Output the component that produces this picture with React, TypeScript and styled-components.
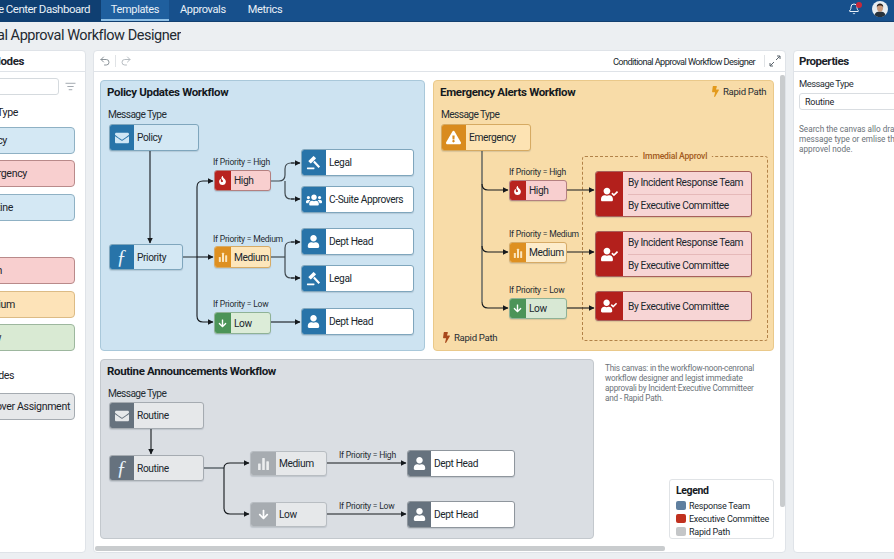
import React from "react";
import styled, { createGlobalStyle } from "styled-components";
import { Bell, Undo2, Redo2, ListFilter } from "lucide-react";
import {
  FaEnvelope, FaFire, FaUsers, FaUser, FaUserCheck,
  FaExclamationTriangle, FaArrowDown, FaBolt,
} from "react-icons/fa";

const Global = createGlobalStyle`
  html, body { margin: 0; padding: 0; background: #eceff2; }
  * { box-sizing: border-box; }
  body { font-family: Roboto, "Liberation Sans", sans-serif; color: #1c2329; }
`;

const Shell = styled.div`
  width: 894px; height: 559px; overflow: hidden; display: flex; flex-direction: column; background: #eceff2;
`;
const TopBar = styled.header`
  height: 22px; flex: none; display: flex; align-items: stretch; background: #17508c; border-bottom: 1px solid #123f70; color: #e9f1f8;
`;
const Brand = styled.div`
  width: 101px; flex: none; display: flex; justify-content: flex-end; align-items: center; overflow: hidden;
  padding: 0 11px 3px 0; white-space: nowrap; background: #0f3f72; font-size: 11.5px; letter-spacing: -0.5px; font-weight: 400;
`;
const Tab = styled.div<{ $active?: boolean }>`
  padding: 0 11px 3px; display: flex; align-items: center; font-size: 11px; letter-spacing: -0.35px; font-weight: 400;
  background: ${p => (p.$active ? "#1f5f9e" : "transparent")};
  box-shadow: ${p => (p.$active ? "inset 0 -2px 0 #8fc0e6" : "none")};
  width: ${p => (p.$active ? "68px" : "auto")};
  justify-content: center;
`;
const TopRight = styled.div`
  margin-left: auto; display: flex; align-items: center; gap: 12px; margin-right: 6px; padding-bottom: 3px; position: relative;
`;
const BellWrap = styled.div`
  position: relative; width: 12px; height: 12px; display: flex;
`;
const BellDot = styled.span`
  position: absolute; right: -2px; top: -1px; width: 6px; height: 6px; border-radius: 50%; background: #c8283a;
`;
const TitleRow = styled.div`
  height: 28px; flex: none; display: flex; align-items: center; padding-bottom: 2px;
`;
const PageTitle = styled.h1`
  margin: 0; width: 181px; display: flex; justify-content: flex-end; overflow: hidden; white-space: nowrap;
  font-size: 14.5px; font-weight: 400; color: #232a31; letter-spacing: -0.45px;
`;
const Main = styled.main`
  height: 503px; flex: none; display: flex; gap: 7px; margin-left: -50px;
`;
const Panel = styled.section`
  background: #fff; border: 1px solid #dfe3e8; border-radius: 4px; overflow: hidden; position: relative; flex: none;
`;
const Sidebar = styled(Panel)`
  width: 136px;
`;
const PanelHead = styled.div`
  height: 21px; display: flex; align-items: center; border-bottom: 1px solid #dfe3e8; font-size: 11.5px; font-weight: 700; letter-spacing: -0.4px; white-space: nowrap;
`;
const SideHead = styled(PanelHead)`
  justify-content: flex-end; padding-right: 61px;
`;
const SideBody = styled.div`
  display: flex; flex-direction: column; padding: 6px 10px 0 8px;
`;
const SearchRow = styled.div`
  display: flex; align-items: center; height: 17px; gap: 6px;
`;
const SearchBox = styled.div`
  width: 100px; height: 17px; border: 1px solid #d5dade; border-radius: 3px; background: #fff; flex: none;
`;
const Filter = styled.span`
  color: #9aa1a8; display: flex;
`;
const SideLabel = styled.div<{ $top: number; $w: number }>`
  font-size: 10.6px; letter-spacing: -0.4px; margin-top: ${p => p.$top}px; height: 13px; line-height: 13px; width: ${p => p.$w}px;
  display: flex; justify-content: flex-end; white-space: nowrap;
`;
const PaletteItem = styled.div<{ $bg: string; $line: string; $top: number; $end: number }>`
  height: 27px; width: 116px; margin-top: ${p => p.$top}px; display: flex; align-items: center; justify-content: flex-end; padding-right: ${p => p.$end}px;
  border: 1px solid ${p => p.$line}; border-radius: 4px; background: ${p => p.$bg}; font-size: 10.6px; letter-spacing: -0.35px; white-space: nowrap;
`;
const Designer = styled(Panel)`
  width: 693px;
`;
const Toolbar = styled(PanelHead)`
  font-weight: 400; padding: 0 4px 0 5px; gap: 1px; color: #8b9399;
`;
const ToolDivider = styled.span`
  width: 1px; height: 12px; background: #e0e3e6; margin: 0 3px;
`;
const ToolTitle = styled.span`
  margin-left: auto; margin-right: 5px; font-size: 9.2px; letter-spacing: -0.58px; color: #20272d; font-weight: 400;
`;
const CanvasBody = styled.div`
  padding: 8px 0 0 6px; display: flex; flex-direction: column; gap: 8px;
`;
const TopCards = styled.div`
  display: flex; gap: 8px;
`;
const BottomRow = styled.div`
  display: flex; gap: 11px;
`;
const Card = styled.div<{ $w: number; $h: number; $bg: string; $line: string }>`
  position: relative; flex: none; width: ${p => p.$w}px; height: ${p => p.$h}px; background: ${p => p.$bg};
  border: 1px solid ${p => p.$line}; border-radius: 4px;
`;
const CardTitle = styled.h2`
  position: absolute; left: 6px; top: 3px; margin: 0; font-size: 11.5px; line-height: 16px; font-weight: 700; letter-spacing: -0.33px; color: #14191e; white-space: nowrap;
`;
const Edges = styled.svg`
  position: absolute; left: -1px; top: -1px; pointer-events: none; overflow: visible;
`;
const Caption = styled.div<{ $x: number; $y: number; $s?: number }>`
  position: absolute; left: ${p => p.$x}px; top: ${p => p.$y}px; font-size: ${p => p.$s ?? 8.6}px; line-height: 12px; letter-spacing: ${p => (p.$s ? -0.6 : -0.25)}px; color: #262d33; white-space: nowrap;
`;
const Node = styled.div<{ $x: number; $y: number; $w: number; $h: number; $bg: string; $line: string }>`
  position: absolute; left: ${p => p.$x}px; top: ${p => p.$y}px; width: ${p => p.$w}px; height: ${p => p.$h}px;
  display: flex; background: ${p => p.$bg}; border: 1px solid ${p => p.$line}; border-radius: 3px; overflow: hidden;
  box-shadow: 0 1px 1px rgba(40,60,80,.15);
`;
const NodeIcon = styled.div<{ $w: number; $bg: string }>`
  flex: none; width: ${p => p.$w}px; background: ${p => p.$bg}; color: #fff; display: flex; align-items: center; justify-content: center; margin: -1px 0 -1px -1px;
`;
const NodeText = styled.div<{ $pad: number }>`
  flex: 1; display: flex; flex-direction: column; justify-content: center; padding-left: ${p => p.$pad}px; font-size: 10.2px; letter-spacing: -0.4px; color: #20272d; white-space: nowrap; min-width: 0;
`;
const StackLine = styled.div`
  flex: 1; display: flex; align-items: center; & + & { border-top: 1px solid #e6b9b9; }
`;
const FuncGlyph = styled.span`
  font-family: "Liberation Serif", serif; font-style: italic; font-size: 20px; line-height: 1; color: #e9f3fa;
`;
const DashedBox = styled.div`
  position: absolute; left: 148px; top: 75px; width: 186px; height: 185px; border: 1px dashed #b28248; border-radius: 3px;
`;
const DashedLabel = styled.span`
  position: absolute; left: 50%; top: -6px; transform: translateX(-50%); background: #f8dca8; padding: 0 5px; font-size: 8.6px; line-height: 11px; letter-spacing: -0.2px; font-weight: 500; color: #a25a20; white-space: nowrap;
`;
const RapidTag = styled.div<{ $x: number; $y: number; $c: string }>`
  position: absolute; left: ${p => p.$x}px; top: ${p => p.$y}px; display: flex; align-items: center; gap: 2px; font-size: 9.6px; letter-spacing: -0.3px; color: #262d33; white-space: nowrap;
  & svg { color: ${p => p.$c}; }
`;
const SideColumn = styled.div`
  width: 169px; flex: none; display: flex; flex-direction: column; justify-content: space-between; padding-top: 4px;
`;
const Note = styled.p`
  margin: 0; font-size: 8.2px; line-height: 10px; letter-spacing: -0.2px; color: #6b7278; white-space: nowrap;
`;
const Legend = styled.div`
  width: 105px; height: 60px; align-self: flex-end; border: 1px solid #e0e3e6; border-radius: 3px; padding: 4px 6px 0; background: #fff;
  display: flex; flex-direction: column;
`;
const LegendTitle = styled.div`
  font-size: 10.5px; font-weight: 700; letter-spacing: -0.4px; line-height: 14px; margin-bottom: 1px; color: #14191e;
`;
const LegendRow = styled.div`
  display: flex; align-items: center; gap: 3px; height: 13px; font-size: 9px; letter-spacing: -0.25px; color: #20272d; white-space: nowrap;
`;
const Swatch = styled.span<{ $c: string }>`
  flex: none; width: 10px; height: 9px; border-radius: 2px; background: ${p => p.$c};
`;
const VScroll = styled.div`
  position: absolute; right: 0; top: 24px; width: 5px; height: 432px; background: #c9ccce; border-radius: 2px;
`;
const HScroll = styled.div`
  position: absolute; left: 1px; bottom: 1px; width: 570px; height: 5px; background: #c9ccce; border-radius: 2px;
`;
const Properties = styled(Panel)`
  width: 120px;
`;
const PropHead = styled(PanelHead)`
  padding-left: 5px; font-size: 11.5px; letter-spacing: -0.45px;
`;
const PropBody = styled.div`
  padding: 6px 0 0 5px; display: flex; flex-direction: column;
`;
const PropLabel = styled.div`
  font-size: 9.4px; letter-spacing: -0.5px; line-height: 12px; color: #2a3137;
`;
const PropSelect = styled.div`
  margin-top: 3px; height: 17px; width: 130px; border: 1px solid #d9dde1; border-radius: 3px; padding-left: 5px; display: flex; align-items: center; font-size: 9px; letter-spacing: -0.2px;
`;
const PropNote = styled.p`
  margin: 14px 0 0; font-size: 8.2px; line-height: 10px; color: #6b7278; white-space: nowrap;
`;

const Bars = ({ size = 10, color = "#fff" }: { size?: number; color?: string }) => (
  <svg width={size} height={size} viewBox="0 0 12 12" fill={color}>
    <rect x="1" y="6" width="2.4" height="6" rx=".5" />
    <rect x="4.8" y="1" width="2.4" height="11" rx=".5" />
    <rect x="8.6" y="4" width="2.4" height="8" rx=".5" />
  </svg>
);
const Gavel = ({ size = 14 }: { size?: number }) => (
  <svg width={size} height={size} viewBox="0 0 16 16" fill="#fff">
    <rect x="2.6" y="3.2" width="8" height="3.8" rx=".5" transform="rotate(-45 6.6 5.1)" />
    <path d="M7.6 7.6l1.6-1.6 5.8 6.2-1.7 1.6z" />
    <rect x="1" y="13.2" width="8" height="1.9" rx=".5" />
  </svg>
);
const Expand = () => (
  <svg width="12" height="12" viewBox="0 0 12 12" fill="none" stroke="#5b646c" strokeWidth="1">
    <path d="M7 5l4-4M8 1h3v3" />
    <path d="M5 7l-4 4M1 8v3h3" />
  </svg>
);
const Avatar = () => (
  <svg width="16" height="16" viewBox="0 0 16 16">
    <circle cx="8" cy="8" r="8" fill="#e8edf1" />
    <path d="M2.5 14c.6-2.6 2.6-3.6 5.5-3.6s4.9 1 5.5 3.6A8 8 0 0 1 2.5 14z" fill="#26313b" />
    <ellipse cx="8" cy="7" rx="3" ry="3.7" fill="#c99a7c" />
    <path d="M4.8 6.4C4.6 3.6 6.2 2.5 8 2.5s3.5 1.1 3.2 3.9c-.5-1.4-1.4-1.8-3.2-1.8s-2.7.4-3.2 1.8z" fill="#2b211c" />
  </svg>
);

type IconKey = "mail" | "func" | "fire" | "bars" | "down" | "gavel" | "users" | "user" | "check" | "warn";
const icon = (k: IconKey, s: number, mailColor?: string) => {
  switch (k) {
    case "mail": return <FaEnvelope size={s} color={mailColor} />;
    case "func": return <FuncGlyph>ƒ</FuncGlyph>;
    case "fire": return <FaFire size={s} />;
    case "bars": return <Bars size={s} color={mailColor ?? "#fbe6bf"} />;
    case "down": return <FaArrowDown size={s} />;
    case "gavel": return <Gavel size={s} />;
    case "users": return <FaUsers size={s} />;
    case "user": return <FaUser size={s} />;
    case "check": return <FaUserCheck size={s} />;
    case "warn": return <FaExclamationTriangle size={s} />;
  }
};

type N = { x: number; y: number; w: number; h: number; iw: number; ib: string; bg: string; line: string; k: IconKey; s: number; t: string[]; mc?: string; pad?: number };
const BLUE = { ib: "#2874a9", bg: "#d4e8f4", line: "#7fa6bd" };
const WHITE = { ib: "#2874a9", bg: "#fff", line: "#7fa6bd" };
const HI = { ib: "#b8231f", bg: "#f8cfcf", line: "#b48080" };
const ME = { ib: "#de9021", bg: "#fde6bb", line: "#d7ab66" };
const LO = { ib: "#4c9458", bg: "#dcecd8", line: "#8fb296" };
const RD = { ib: "#b3201c", bg: "#f7d5d5", line: "#a8605a", pad: 5 };
const GR = { ib: "#66727e", bg: "#e6e8ea", line: "#a5abb1" };
const GW = { ib: "#66727e", bg: "#fff", line: "#8f969d" };
const GL = { ib: "#a7acb1", bg: "#e6e8ea", line: "#b8bdc2" };

const policyNodes: N[] = [
  { x: 109, y: 124, w: 90, h: 27, iw: 25, ...BLUE, k: "mail", s: 14, mc: "#cfe6f5", t: ["Policy"] },
  { x: 109, y: 244, w: 74, h: 26, iw: 25, ...BLUE, k: "func", s: 14, t: ["Priority"] },
  { x: 214, y: 170, w: 57, h: 21, iw: 17, ...HI, k: "fire", s: 9, t: ["High"] },
  { x: 214, y: 246, w: 57, h: 22, iw: 17, ...ME, k: "bars", s: 10, t: ["Medium"] },
  { x: 214, y: 312, w: 57, h: 22, iw: 17, ...LO, k: "down", s: 9, t: ["Low"] },
  { x: 301, y: 149, w: 113, h: 27, iw: 25, ...WHITE, k: "gavel", s: 15, t: ["Legal"] },
  { x: 301, y: 186, w: 113, h: 27, iw: 25, ...WHITE, k: "users", s: 16, t: ["C-Suite Approvers"] },
  { x: 301, y: 228, w: 113, h: 27, iw: 25, ...WHITE, k: "user", s: 13, t: ["Dept Head"] },
  { x: 301, y: 265, w: 113, h: 27, iw: 25, ...WHITE, k: "gavel", s: 15, t: ["Legal"] },
  { x: 301, y: 308, w: 113, h: 27, iw: 25, ...WHITE, k: "user", s: 13, t: ["Dept Head"] },
];
const emergencyNodes: N[] = [
  { x: 441, y: 124, w: 90, h: 27, iw: 25, ib: "#d98b1e", bg: "#fde3b3", line: "#d6aa62", k: "warn", s: 15, t: ["Emergency"] },
  { x: 509, y: 180, w: 58, h: 21, iw: 17, ...HI, k: "fire", s: 9, t: ["High"] },
  { x: 509, y: 242, w: 58, h: 21, iw: 17, ...ME, bg: "#fdeccb", k: "bars", s: 10, t: ["Medium"] },
  { x: 509, y: 298, w: 58, h: 21, iw: 17, ...LO, bg: "#d8e8d4", k: "down", s: 9, t: ["Low"] },
  { x: 595, y: 171, w: 157, h: 46, iw: 28, ...RD, k: "check", s: 17, t: ["By Incident Response Team", "By Executive Committee"] },
  { x: 595, y: 231, w: 157, h: 46, iw: 28, ...RD, k: "check", s: 17, t: ["By Incident Response Team", "By Executive Committee"] },
  { x: 595, y: 291, w: 157, h: 30, iw: 28, ...RD, k: "check", s: 16, t: ["By Executive Committee"] },
];
const routineNodes: N[] = [
  { x: 109, y: 402, w: 95, h: 27, iw: 25, ...GR, k: "mail", s: 14, mc: "#e6e8ea", t: ["Routine"] },
  { x: 109, y: 455, w: 95, h: 26, iw: 25, ...GR, k: "func", s: 14, t: ["Routine"] },
  { x: 250, y: 451, w: 77, h: 25, iw: 26, ...GL, k: "bars", s: 13, mc: "#eceeef", t: ["Medium"] },
  { x: 250, y: 502, w: 77, h: 25, iw: 26, ...GL, k: "down", s: 11, t: ["Low"] },
  { x: 407, y: 450, w: 108, h: 27, iw: 24, ...GW, k: "user", s: 13, t: ["Dept Head"] },
  { x: 407, y: 501, w: 108, h: 27, iw: 24, ...GW, k: "user", s: 13, t: ["Dept Head"] },
];

const renderNodes = (nodes: N[], ox: number, oy: number) =>
  nodes.map((n, i) => (
    <Node key={i} $x={n.x - ox - 1} $y={n.y - oy - 1} $w={n.w} $h={n.h} $bg={n.bg} $line={n.line}>
      <NodeIcon $w={n.iw} $bg={n.ib}>{icon(n.k, n.s, n.mc)}</NodeIcon>
      <NodeText $pad={n.pad ?? 3}>
        {n.t.map(line => <StackLine key={line}>{line}</StackLine>)}
      </NodeText>
    </Node>
  ));

const Wires = ({ ox, oy, w, h, id, solid, arrows }: { ox: number; oy: number; w: number; h: number; id: string; solid: string[]; arrows: string[] }) => (
  <Edges width={w} height={h} viewBox={`${ox} ${oy} ${w} ${h}`}>
    <defs>
      <marker id={id} markerWidth="6" markerHeight="6" refX="5.5" refY="3" orient="auto" markerUnits="userSpaceOnUse">
        <path d="M0 0L6 3L0 6z" fill="#15191d" />
      </marker>
    </defs>
    {solid.map((d, i) => <path key={i} d={d} fill="none" stroke="#3f484f" strokeWidth="1.2" />)}
    {arrows.map((d, i) => <path key={i} d={d} fill="none" stroke="#15191d" strokeWidth="1.1" markerEnd={`url(#${id})`} />)}
  </Edges>
);

const palette = [
  { t: "Policy", bg: "#d4e8f4", line: "#8fb1c4", top: 8, end: 67 },
  { t: "Emergency", bg: "#f8cfcf", line: "#b98a8a", top: 6, end: 47 },
  { t: "Routine", bg: "#d4e8f4", line: "#8fb1c4", top: 7, end: 61 },
];
const priority = [
  { t: "High", bg: "#f8cfcf", line: "#b98a8a", top: 36, end: 72 },
  { t: "Medium", bg: "#fde3b8", line: "#dcbb85", top: 7, end: 59 },
  { t: "Low", bg: "#d9ead3", line: "#9db79e", top: 6, end: 73 },
];

export default function App() {
  return (
    <Shell>
      <Global />
      <TopBar>
        <Brand>Message Center Dashboard</Brand>
        <Tab $active>Templates</Tab>
        <Tab>Approvals</Tab>
        <Tab>Metrics</Tab>
        <TopRight>
          <BellWrap><Bell size={12} color="#e9f1f8" /><BellDot /></BellWrap>
          <Avatar />
        </TopRight>
      </TopBar>
      <TitleRow><PageTitle>Conditional Approval Workflow Designer</PageTitle></TitleRow>
      <Main>
        <Sidebar>
          <SideHead>Workflow Nodes</SideHead>
          <SideBody>
            <SearchRow>
              <SearchBox />
              <Filter><ListFilter size={11} /></Filter>
            </SearchRow>
            <SideLabel $top={11} $w={59}>Message Type</SideLabel>
            {palette.map(p => <PaletteItem key={p.t} $bg={p.bg} $line={p.line} $top={p.top} $end={p.end}>{p.t}</PaletteItem>)}
            {priority.map(p => <PaletteItem key={p.t} $bg={p.bg} $line={p.line} $top={p.top} $end={p.end}>{p.t}</PaletteItem>)}
            <SideLabel $top={18} $w={55}>Approver Nodes</SideLabel>
            <PaletteItem $bg="#e6e8ea" $line="#a5abb1" $top={11} $end={4}>Approver Assignment</PaletteItem>
          </SideBody>
        </Sidebar>
        <Designer>
          <Toolbar>
            <Undo2 size={12} />
            <ToolDivider />
            <Redo2 size={12} color="#b6bcc1" />
            <ToolTitle>Conditional Approval Workflow Designer</ToolTitle>
            <ToolDivider />
            <Expand />
          </Toolbar>
          <CanvasBody>
            <TopCards>
              <Card $w={325} $h={271} $bg="#cde3f1" $line="#a9c8da">
                <Wires ox={100} oy={80} w={325} h={271} id="a1"
                  solid={[
                    "M183 257H197", "M271 181H279Q285 181 285 175V169Q285 163 291 163H294", "M285 181V193Q285 199 291 199H294",
                    "M271 257H285", "M285 257V248Q285 242 291 242H294", "M285 257V272Q285 278 291 278H294",
                  ]}
                  arrows={[
                    "M150 150V243", "M197 257H213", "M197 257V187Q197 181 203 181H213", "M197 257V316Q197 322 203 322H213",
                    "M291 163H300", "M291 199H300", "M291 242H300", "M291 278H300", "M271 322H300",
                  ]} />
                <CardTitle>Policy Updates Workflow</CardTitle>
                <Caption $x={7} $y={28} $s={10.2}>Message Type</Caption>
                <Caption $x={112} $y={75}>If Priority = High</Caption>
                <Caption $x={112} $y={152}>If Priority = Medium</Caption>
                <Caption $x={112} $y={217}>If Priority = Low</Caption>
                {renderNodes(policyNodes, 100, 80)}
              </Card>
              <Card $w={341} $h={271} $bg="#f8dca8" $line="#eac98a">
                <DashedBox><DashedLabel>Immedial Approvl</DashedLabel></DashedBox>
                <Wires ox={433} oy={80} w={341} h={271} id="a2"
                  solid={["M482 150V302"]}
                  arrows={[
                    "M482 184Q482 190 488 190H508", "M482 246Q482 252 488 252H508", "M482 302Q482 308 488 308H508",
                    "M567 190H594", "M567 252H594", "M567 308H594",
                  ]} />
                <CardTitle>Emergency Alerts Workflow</CardTitle>
                <RapidTag $x={276} $y={5} $c="#e39a1c"><FaBolt size={11} />Rapid Path</RapidTag>
                <Caption $x={7} $y={28} $s={10.2}>Message Type</Caption>
                <Caption $x={75} $y={85}>If Priority = High</Caption>
                <Caption $x={75} $y={147}>If Priority = Medium</Caption>
                <Caption $x={75} $y={203}>If Priority = Low</Caption>
                {renderNodes(emergencyNodes, 433, 80)}
                <RapidTag $x={7} $y={251} $c="#a8481c"><FaBolt size={11} />Rapid Path</RapidTag>
              </Card>
            </TopCards>
            <BottomRow>
              <Card $w={494} $h={180} $bg="#dadee3" $line="#c3c8cd">
                <Wires ox={100} oy={359} w={494} h={180} id="a3"
                  solid={["M204 468H224"]}
                  arrows={[
                    "M151 429V454", "M224 468Q224 463 230 463H249", "M224 468V508Q224 514 230 514H249",
                    "M327 463H406", "M327 514H406",
                  ]} />
                <CardTitle>Routine Announcements Workflow</CardTitle>
                <Caption $x={7} $y={28} $s={10.2}>Message Type</Caption>
                <Caption $x={238} $y={89}>If Priority = High</Caption>
                <Caption $x={238} $y={140}>If Priority = Low</Caption>
                {renderNodes(routineNodes, 100, 359)}
              </Card>
              <SideColumn>
                <Note>
                  This canvas: in the workflow-noon-cenronal<br />
                  workflow designer and legist immediate<br />
                  approvali by Incident·Executive Committeer<br />
                  and - Rapid Path.
                </Note>
                <Legend>
                  <LegendTitle>Legend</LegendTitle>
                  <LegendRow><Swatch $c="#5f7f9f" />Response Team</LegendRow>
                  <LegendRow><Swatch $c="#c0301f" />Executive Committee</LegendRow>
                  <LegendRow><Swatch $c="#c4c6c8" />Rapid Path</LegendRow>
                </Legend>
              </SideColumn>
            </BottomRow>
          </CanvasBody>
          <VScroll />
          <HScroll />
        </Designer>
        <Properties>
          <PropHead>Properties</PropHead>
          <PropBody>
            <PropLabel>Message Type</PropLabel>
            <PropSelect>Routine</PropSelect>
            <PropNote>
              Search the canvas allo drag<br />
              message type or emlise the<br />
              approvel node.
            </PropNote>
          </PropBody>
        </Properties>
      </Main>
    </Shell>
  );
}
